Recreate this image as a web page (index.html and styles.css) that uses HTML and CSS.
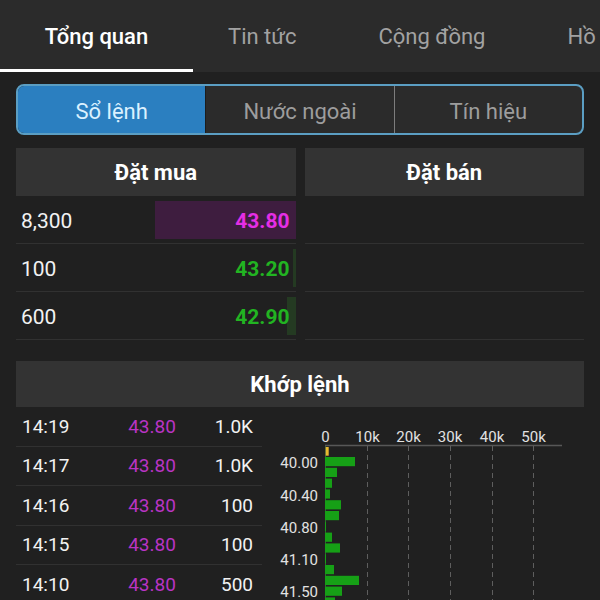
FILE: index.html
```html
<!DOCTYPE html>
<html lang="vi">
<head>
    <meta charset="UTF-8">
    <meta name="viewport" content="width=device-width, initial-scale=1.0">
    <title>Sổ lệnh</title>
    <link rel="stylesheet" href="styles.css">
</head>
<body>
    <nav class="tabs">
        <div class="tab active">Tổng quan</div>
        <div class="tab">Tin tức</div>
        <div class="tab">Cộng đồng</div>
        <div class="tab">Hồ sơ</div>
    </nav>

    <div class="segment">
        <div class="seg active">Sổ lệnh</div>
        <div class="seg">Nước ngoài</div>
        <div class="seg">Tín hiệu</div>
    </div>

    <div class="book">
        <div class="side">
            <div class="side-head">Đặt mua</div>
            <div class="book-row ceil" style="--bar: 141px">
                <span class="qty">8,300</span>
                <span class="price">43.80</span>
            </div>
            <div class="book-row up" style="--bar: 3px">
                <span class="qty">100</span>
                <span class="price">43.20</span>
            </div>
            <div class="book-row up" style="--bar: 9px">
                <span class="qty">600</span>
                <span class="price">42.90</span>
            </div>
        </div>
        <div class="side">
            <div class="side-head">Đặt bán</div>
            <div class="book-row"></div>
            <div class="book-row"></div>
            <div class="book-row"></div>
        </div>
    </div>

    <div class="match-head">Khớp lệnh</div>

    <div class="match">
        <div class="trades">
            <div class="trade"><span class="time">14:19</span><span class="price">43.80</span><span class="vol">1.0K</span></div>
            <div class="trade"><span class="time">14:17</span><span class="price">43.80</span><span class="vol">1.0K</span></div>
            <div class="trade"><span class="time">14:16</span><span class="price">43.80</span><span class="vol">100</span></div>
            <div class="trade"><span class="time">14:15</span><span class="price">43.80</span><span class="vol">100</span></div>
            <div class="trade"><span class="time">14:10</span><span class="price">43.80</span><span class="vol">500</span></div>
        </div>

        <!-- volume by price -->
        <svg class="chart" viewBox="0 0 322 193" width="322" height="193">
            <g class="ticks">
                <text x="63.5" y="35">0</text>
                <text x="105.5" y="35">10k</text>
                <text x="146.5" y="35">20k</text>
                <text x="188" y="35">30k</text>
                <text x="230" y="35">40k</text>
                <text x="271.5" y="35">50k</text>
            </g>
            <line class="axis" x1="63" y1="38.5" x2="300" y2="38.5"/>
            <g class="grid">
                <line x1="105.5" y1="39" x2="105.5" y2="193"/>
                <line x1="146.5" y1="39" x2="146.5" y2="193"/>
                <line x1="188.5" y1="39" x2="188.5" y2="193"/>
                <line x1="230.5" y1="39" x2="230.5" y2="193"/>
                <line x1="271.5" y1="39" x2="271.5" y2="193"/>
            </g>
            <line class="zero" x1="63.5" y1="39" x2="63.5" y2="193"/>
            <g class="levels">
                <text x="56" y="61">40.00</text>
                <text x="56" y="93.5">40.40</text>
                <text x="56" y="125.5">40.80</text>
                <text x="56" y="158">41.10</text>
                <text x="56" y="190">41.50</text>
            </g>
            <rect class="last" x="63.7" y="40" width="3" height="8.7"/>
            <g class="bars">
                <rect x="63" y="50" width="30" height="9.2"/>
                <rect x="63" y="60.8" width="12" height="9.2"/>
                <rect x="63" y="71.6" width="7" height="9.2"/>
                <rect x="63" y="82.4" width="5" height="9.2"/>
                <rect x="63" y="93.2" width="16" height="9.2"/>
                <rect x="63" y="104" width="14" height="9.2"/>
                <rect x="63" y="114.8" width="1" height="9.2"/>
                <rect x="63" y="125.6" width="7" height="9.2"/>
                <rect x="63" y="136.4" width="15" height="9.2"/>
                <rect x="63" y="147.2" width="1" height="9.2"/>
                <rect x="63" y="158" width="9" height="9.2"/>
                <rect x="63" y="168.8" width="34" height="9.2"/>
                <rect x="63" y="179.6" width="17" height="9.2"/>
                <rect x="63" y="190.4" width="10" height="9.2"/>
            </g>
        </svg>
    </div>
</body>
</html>
```

FILE: styles.css
```css
:root {
    --bg: #202020;
    --bar-bg: #2b2b2b;
    --head-bg: #333333;
    --line: #313131;
    --ceil: #e52ee5;
    --ceil-soft: #b934c4;
    --up: #22b422;
    --blue: #2b7fc0;
}

* {
    margin: 0;
    padding: 0;
    box-sizing: border-box;
}

body {
    background-color: var(--bg);
    color: #f2f2f2;
    font-family: Roboto, 'Noto Sans', sans-serif;
    width: 600px;
    height: 600px;
    overflow: hidden;
}

/* top tabs */
.tabs {
    display: flex;
    height: 72px;
    background-color: var(--bar-bg);
    white-space: nowrap;
    overflow: hidden;
}

.tab {
    flex-shrink: 0;
    display: flex;
    align-items: center;
    padding: 4px 41px 0;
    font-size: 22px;
    color: #a2a2a2;
    border-bottom: 3px solid transparent;
}

.tab.active {
    width: 193px;
    padding: 4px 0 0;
    justify-content: center;
    color: #ffffff;
    font-weight: 500;
    border-bottom-color: #ffffff;
}

.tab.active + .tab {
    padding-left: 35px;
}

/* segmented control */
.segment {
    display: flex;
    height: 51px;
    margin: 12px 16px 0;
    border: 2px solid #5b9ec3;
    border-radius: 8px;
    background-color: var(--bar-bg);
    overflow: hidden;
}

.seg {
    flex: 1;
    display: flex;
    align-items: center;
    justify-content: center;
    padding-top: 3px;
    font-size: 22px;
    color: #9d9d9d;
}

.seg + .seg {
    border-left: 1px solid #7d7d7d;
}

.seg.active {
    background-color: var(--blue);
    color: #dbf1ff;
}

.seg.active + .seg {
    border-left-color: #1c1c1c;
}

/* order book */
.book {
    display: flex;
    gap: 9px;
    margin: 13px 16px 0;
}

.side {
    flex: 1;
}

.side-head,
.match-head {
    display: flex;
    align-items: center;
    justify-content: center;
    background-color: var(--head-bg);
    font-size: 22px;
    font-weight: 700;
    color: #ffffff;
}

.side-head {
    height: 48px;
}

.book-row {
    display: flex;
    align-items: center;
    justify-content: space-between;
    height: 48px;
    padding: 3px 6px 0 5px;
    border-bottom: 1px solid var(--line);
    font-size: 21px;
    background-image: linear-gradient(var(--tint), var(--tint));
    background-size: var(--bar, 0) 38px;
    background-position: right center;
    background-repeat: no-repeat;
}

.book-row .price {
    font-weight: 700;
}

.book-row.ceil {
    --tint: #3e1d3f;
}

.book-row.ceil .price {
    color: var(--ceil);
}

.book-row.up {
    --tint: #243a22;
}

.book-row.up .price {
    color: var(--up);
}

/* matched orders */
.match-head {
    height: 46px;
    margin: 21px 16px 0;
}

.match {
    display: flex;
    margin-left: 16px;
}

.trades {
    width: 246px;
}

.trade {
    display: grid;
    grid-template-columns: 90px 92px 1fr;
    align-items: center;
    height: 39.5px;
    border-bottom: 1px solid var(--line);
    font-size: 19px;
}

.trade .time {
    padding-left: 6px;
}

.trade .price {
    text-align: center;
    color: var(--ceil-soft);
}

.trade .vol {
    text-align: right;
    padding-right: 9px;
}

.chart {
    display: block;
    width: 322px;
    height: 193px;
}

.chart text {
    font-family: Roboto, 'Noto Sans', sans-serif;
    font-size: 15px;
    fill: #e2e2e2;
}

.chart .ticks text {
    text-anchor: middle;
}

.chart .levels text {
    text-anchor: end;
}

.chart .axis {
    stroke: #575757;
    stroke-width: 1.5;
}

.chart .grid line {
    stroke: #5e5e5e;
    stroke-dasharray: 5 4;
}

.chart .zero {
    stroke: #3a5a3a;
}

.chart .bars rect {
    fill: #16a016;
}

.chart .last {
    fill: #e8b830;
}
```
